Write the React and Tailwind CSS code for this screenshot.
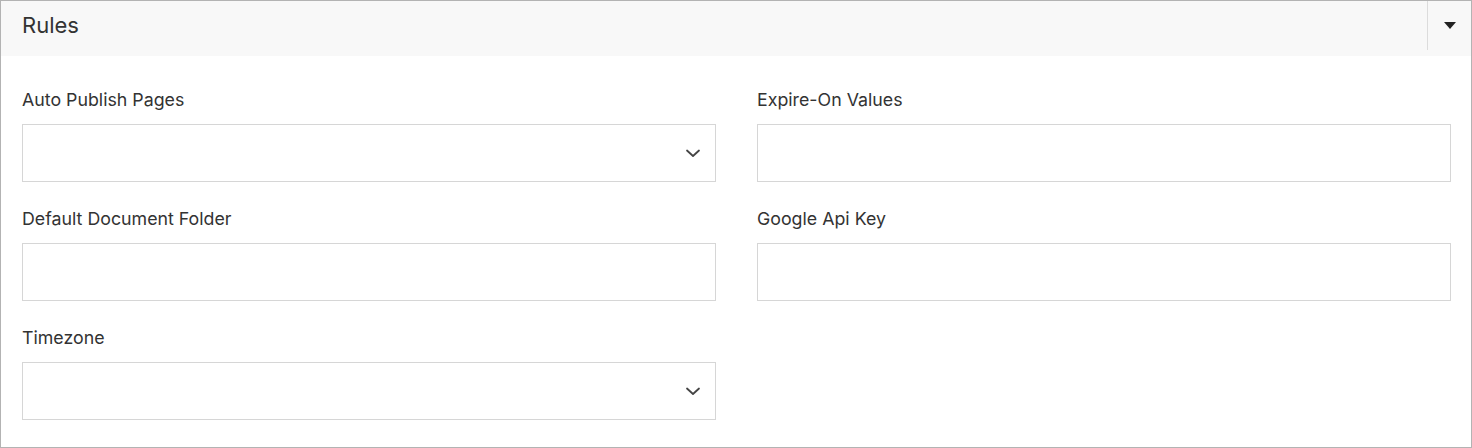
import React from "react";

function Chevron() {
  return (
    <svg width="16" height="10" viewBox="0 0 16 10" fill="none" className="shrink-0">
      <path d="M2 2.5 L8 8 L14 2.5" stroke="#444" strokeWidth="1.8" strokeLinecap="round" strokeLinejoin="round" />
    </svg>
  );
}

function Field({ label, select }) {
  return (
    <div className="flex flex-col">
      <label className="text-[17.8px] leading-[24px] text-[#333] mb-[12px]">{label}</label>
      <div className="h-[58px] border border-[#d6d6d6] bg-white flex items-center justify-end pr-[14px]">
        {select ? <Chevron /> : null}
      </div>
    </div>
  );
}

export default function App() {
  return (
    <div
      className="w-[1472px] h-[448px] border border-[#b3b3b3] bg-white flex flex-col"
      style={{ fontFamily: "Inter, 'Noto Sans', sans-serif" }}
    >
      <div className="h-[55px] bg-[#f8f8f8] flex items-stretch shrink-0">
        <div className="flex-1 flex items-center pl-[21px] pb-[6px] text-[22px] text-[#333]">Rules</div>
        <div className="w-[44px] mb-[6px] border-l border-[#dcdcdc] flex items-center justify-center">
          <svg width="12" height="7" viewBox="0 0 12 7">
            <path d="M0 0 H12 L6 7 Z" fill="#222" />
          </svg>
        </div>
      </div>
      <div className="grid grid-cols-2 gap-x-[41px] gap-y-[25px] pl-[21px] pr-[20px] pt-[32px]">
        <Field label="Auto Publish Pages" select />
        <Field label="Expire-On Values" />
        <Field label="Default Document Folder" />
        <Field label="Google Api Key" />
        <Field label="Timezone" select />
      </div>
    </div>
  );
}
